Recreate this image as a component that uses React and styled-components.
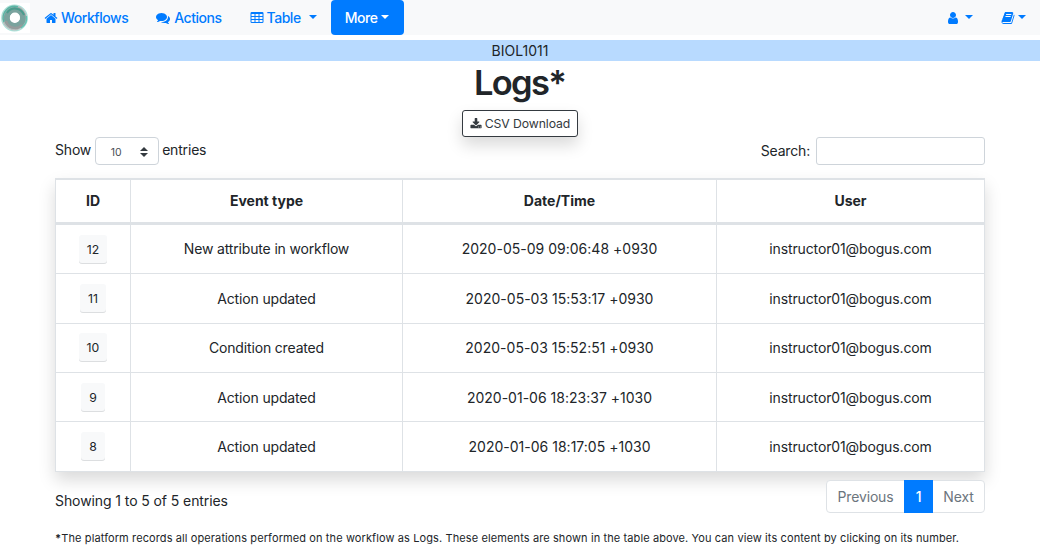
import React from 'react';
import styled, { createGlobalStyle, css } from 'styled-components';

const Global = createGlobalStyle`
  * { box-sizing: border-box; }
  body {
    margin: 0;
    background: #fff;
    color: #212529;
    font: 400 14px/21px Inter, "Liberation Sans", sans-serif;
    overflow: hidden;
  }
`;

const Navbar = styled.nav`
  display: flex;
  align-items: center;
  height: 35px;
  background: #f8f9fa;
  color: #007bff;
  font-weight: 500;
  letter-spacing: -0.47px;
`;

const Brand = styled.a`
  display: block;
  width: 30px;
  height: 30px;
  margin-top: 1px;
`;

const NavLink = styled.a`
  display: flex;
  align-items: center;
  height: 35px;
  margin-left: ${(p) => p.$gap || 0}px;
  white-space: nowrap;
  ${(p) =>
    p.$active &&
    css`
      width: 73px;
      padding-left: 14px;
      background: #007bff;
      color: #fff;
      border-radius: 4px;
    `}
`;

const Glyph = styled.svg`
  flex: none;
  width: ${(p) => p.$size || 14}px;
  height: ${(p) => p.$size || 14}px;
  margin-right: ${(p) => p.$after ?? 3}px;
  fill: currentColor;
`;

const Caret = styled.span`
  margin-left: ${(p) => p.$gap || 4}px;
  margin-top: -2px;
  border: 4px solid transparent;
  border-top-color: currentColor;
  border-bottom: 0;
`;

const NavEnd = styled.div`
  display: flex;
  margin-left: auto;
  padding-right: 14px;
`;

const Banner = styled.div`
  height: 21px;
  margin-top: 5px;
  background: #b8daff;
  text-align: center;
`;

const Page = styled.main`
  width: 930px;
  margin: 0 auto;
`;

const Title = styled.h1`
  margin: 0;
  height: 49px;
  padding: 1px 1px 0 0;
  font-size: 34.5px;
  line-height: 42px;
  font-weight: 600;
  letter-spacing: -1.7px;
  text-align: center;
`;

const DownloadButton = styled.button`
  display: flex;
  align-items: center;
  justify-content: center;
  width: 116px;
  height: 27px;
  margin: 0 auto;
  padding: 0;
  border: 1px solid #343a40;
  border-radius: 3px;
  background: #fff;
  color: #343a40;
  font: 400 12.25px/18px Inter, sans-serif;
  letter-spacing: -0.1px;
  box-shadow: 0 8px 16px rgba(0, 0, 0, 0.15);
`;

const Controls = styled.div`
  display: flex;
  justify-content: space-between;
  height: 41px;
`;

const Field = styled.label`
  display: flex;
  height: 28px;
  align-items: center;
  gap: ${(p) => p.$gap}px;
  letter-spacing: -0.18px;
`;

const FieldText = styled.span`
  padding-bottom: ${(p) => p.$lift}px;
`;

const Select = styled.span`
  display: flex;
  align-items: center;
  justify-content: space-between;
  width: 64px;
  height: 28px;
  padding: 2px 10px 0 15px;
  border: 1px solid #ced4da;
  border-radius: 4px;
  color: #495057;
  font-size: 10.5px;
  letter-spacing: 0;
`;

const Arrows = styled.svg`
  width: 8px;
  height: 10px;
  margin-top: -1px;
  fill: #343a40;
`;

const SearchInput = styled.input`
  width: 169px;
  height: 28px;
  border: 1px solid #ced4da;
  border-radius: 3px;
  background: #fff;
`;

const Table = styled.table`
  width: 930px;
  table-layout: fixed;
  border-collapse: separate;
  border-spacing: 0;
  border-left: 1px solid #dee2e6;
  border-top: 2px solid #dee2e6;
  box-shadow: 0 8px 16px rgba(0, 0, 0, 0.15);
  text-align: center;
`;

const HeadCell = styled.th`
  height: 45px;
  padding: 0 0 2px;
  border-right: 1px solid #dee2e6;
  border-bottom: 3px solid #dee2e6;
  font-weight: 700;
`;

const Cell = styled.td`
  height: ${(p) => p.$height}px;
  padding: 0 0 ${(p) => p.$lift || 0}px;
  border-right: 1px solid #dee2e6;
  border-bottom: 1px solid #dee2e6;
  vertical-align: middle;
  letter-spacing: ${(p) => p.$tracking || 0}px;
`;

const IdButton = styled.button`
  display: block;
  height: 29px;
  margin: 0 auto;
  padding: 0 8px;
  border: 0;
  border-radius: 3px;
  background: #f8f9fa;
  color: #212529;
  font: 400 12.25px/27px Inter, sans-serif;
  letter-spacing: 0.1px;
  box-shadow: inset 0 -1px 0 #dcdee0;
`;

const Footer = styled.div`
  display: flex;
  justify-content: space-between;
  height: 57px;
  padding-top: 8px;
`;

const Summary = styled.div`
  padding-top: 10px;
  letter-spacing: -0.09px;
`;

const Pager = styled.div`
  position: relative;
  display: flex;
  height: 33px;
  border: 1px solid #dee2e6;
  border-radius: 4px;
  background: #fff;
  color: #6c757d;
  letter-spacing: -0.15px;
`;

const PageItem = styled.a`
  width: ${(p) => p.$width}px;
  line-height: 32px;
  text-align: center;
  ${(p) =>
    p.$active &&
    css`
      margin: -1px 0;
      line-height: 34px;
      background: #007bff;
      color: #fff;
      font-weight: 500;
    `}
`;

const Note = styled.p`
  margin: 0;
  font-size: 11px;
  line-height: 18px;
  letter-spacing: 0.107px;
  white-space: nowrap;
`;

const paths = {
  home: 'M1472 992v480q0 26-19 45t-45 19h-384v-384h-256v384h-384q-26 0-45-19t-19-45v-480q0-1 .5-3t.5-3l575-474 575 474q1 2 1 6zm223-69l-62 74q-8 9-21 11h-3q-13 0-21-7l-692-577-692 577q-12 8-24 7-13-2-21-11l-62-74q-8-10-7-23.5t11-21.5l719-599q32-26 76-26t76 26l244 204v-195q0-14 9-23t23-9h192q14 0 23 9t9 23v408l219 182q10 8 11 21.5t-7 23.5z',
  comments: 'M1408 768q0 139-94 257t-256.5 186.5-353.5 68.5q-86 0-176-16-124 88-278 128-36 9-86 16h-3q-11 0-20.5-8t-11.5-21q-1-3-1-6.5t.5-6.5 2-6l2.5-5 3.5-5.5 4-5 4.5-5 4-4.5q5-6 23-25t26-29.5 22.5-29 25-38.5 20.5-44q-124-72-195-177t-71-224q0-139 94-257t256.5-186.5 353.5-68.5 353.5 68.5 256.5 186.5 94 257zm384 256q0 120-71 224.5t-195 176.5q10 24 20.5 44t25 38.5 22.5 29 26 29.5 23 25q1 1 4 4.5t4.5 5 4 5 3.5 5.5l2.5 5 2 6 .5 6.5-1 6.5q-3 14-13 22t-22 7q-50-7-86-16-154-40-278-128-90 16-176 16-271 0-472-132 58 4 88 4 161 0 309-45t264-129q125-92 192-212t67-254q0-77-23-152 129 71 204 178t75 230z',
  table: 'M224 128H1568a160 160 0 0 1 160 160V1376a160 160 0 0 1-160 160H224a160 160 0 0 1-160-160V288A160 160 0 0 1 224 128zM192 384V640H576V384zM704 384V640H1088V384zM1216 384V640H1600V384zM192 768V1024H576V768zM704 768V1024H1088V768zM1216 768V1024H1600V768zM192 1152V1408H576V1152zM704 1152V1408H1088V1152zM1216 1152V1408H1600V1152z',
  user: 'M1536 1399q0 109-62.5 187t-150.5 78h-854q-88 0-150.5-78t-62.5-187q0-85 8.5-160.5t31.5-152 58.5-131 94-89 134.5-34.5q131 128 313 128t313-128q76 0 134.5 34.5t94 89 58.5 131 31.5 152 8.5 160.5zm-256-887q0 159-112.5 271.5t-271.5 112.5-271.5-112.5-112.5-271.5 112.5-271.5 271.5-112.5 271.5 112.5 112.5 271.5z',
  book: 'M1703 478q40 57 18 129l-275 906q-19 64-76.5 107.5t-122.5 43.5h-923q-77 0-148.5-53.5t-99.5-131.5q-24-67-2-127 0-4 3-27t4-37q1-8-3-21.5t-3-19.5q2-11 8-21t16.5-23.5 16.5-23.5q23-38 45-91.5t30-91.5q3-10 .5-30t-.5-28q3-11 17-28t17-23q21-36 42-92t25-90q1-9-2.5-32t.5-28q4-13 22-30.5t22-22.5q19-26 42.5-84.5t27.5-96.5q1-8-3-25.5t-2-26.5q2-8 9-18t18-23 17-21q8-12 16.5-30.5t15-35 16-36 19.5-32 26.5-23.5 36-11.5 47.5 5.5l-1 3q38-9 51-9h761q74 0 114 56t18 130l-274 906q-36 119-71.5 153.5t-128.5 34.5h-869q-27 0-38 15-11 16-1 43 24 70 144 70h923q29 0 56-15.5t35-41.5l300-987q7-22 5-57 38 15 59 43zm-1064 2q-4 13 2 22.5t20 9.5h608q13 0 25.5-9.5t16.5-22.5l21-64q4-13-2-22.5t-20-9.5h-608q-13 0-25.5 9.5t-16.5 22.5zm-83 256q-4 13 2 22.5t20 9.5h608q13 0 25.5-9.5t16.5-22.5l21-64q4-13-2-22.5t-20-9.5h-608q-13 0-25.5 9.5t-16.5 22.5z',
  download: 'M1344 1344q0-26-19-45t-45-19-45 19-19 45 19 45 45 19 45-19 19-45zm256 0q0-26-19-45t-45-19-45 19-19 45 19 45 45 19 45-19 19-45zm128-224v320q0 40-28 68t-68 28h-1472q-40 0-68-28t-28-68v-320q0-40 28-68t68-28h465l135 136q58 56 136 56t136-56l136-136h464q40 0 68 28t28 68zm-325-569q17 41-14 70l-448 448q-18 19-45 19t-45-19l-448-448q-31-29-14-70 17-39 59-39h256v-448q0-26 19-45t45-19h256q26 0 45 19t19 45v448h256q42 0 59 39z',
};

const Icon = ({ name, size, after }) => (
  <Glyph viewBox="0 0 1792 1792" $size={size} $after={after}>
    <path fillRule="evenodd" d={paths[name]} />
  </Glyph>
);

const Logo = () => (
  <svg width="30" height="30" viewBox="0 0 30 30" fill="none">
    <path fill="#fff" d="M0 0h30v30H0z" />
    <circle cx="14.5" cy="15" r="12.8" stroke="#a9e3d9" strokeWidth="1.2" />
    <circle cx="14.5" cy="15" r="11.4" stroke="#b5bcbc" strokeWidth="2" />
    <circle cx="14.8" cy="15" r="8" stroke="#7aa39e" strokeWidth="6" />
    <path d="M4 19A11.5 11.5 0 0 1 18 3.800" stroke="#55b7a5" strokeWidth="1.4" />
    <path d="M7 10A9.500 9.500 0 0 1 24 12" stroke="#4a9c8d" strokeWidth="2" />
    <path d="M6 18A9.500 9.500 0 0 0 22 22" stroke="#969b9b" strokeWidth="2.500" />
    <path d="M21 25A12 12 0 0 0 26.500 13" stroke="#63c4b2" strokeWidth="1.2" />
    <circle cx="15" cy="14.500" r="5" fill="#fff" />
  </svg>
);

const rows = [
  [12, 'New attribute in workflow', '2020-05-09 09:06:48 +0930', 49],
  [11, 'Action updated', '2020-05-03 15:53:17 +0930', 50],
  [10, 'Condition created', '2020-05-03 15:52:51 +0930', 49],
  [9, 'Action updated', '2020-01-06 18:23:37 +1030', 49],
  [8, 'Action updated', '2020-01-06 18:17:05 +1030', 50],
];

export default function App() {
  return (
    <>
      <Global />
      <Navbar>
        <Brand><Logo /></Brand>
        <NavLink $gap={14}><Icon name="home" />Workflows</NavLink>
        <NavLink $gap={28}><Icon name="comments" after={4} />Actions</NavLink>
        <NavLink $gap={28}><Icon name="table" />Table<Caret $gap={8} /></NavLink>
        <NavLink $gap={14} $active>More<Caret /></NavLink>
        <NavEnd>
          <NavLink><Icon name="user" after={0} /><Caret $gap={5} /></NavLink>
          <NavLink $gap={28}><Icon name="book" after={0} /><Caret $gap={3} /></NavLink>
        </NavEnd>
      </Navbar>
      <Banner>BIOL1011</Banner>
      <Page>
        <Title>Logs*</Title>
        <DownloadButton><Icon name="download" size={12} />CSV Download</DownloadButton>
        <Controls>
          <Field $gap={3.5}>
            <FieldText $lift={3}>Show</FieldText>
            <Select>
              10
              <Arrows viewBox="0 0 9 11"><path d="M0 4.500 4.500 0 9 4.500zM0 6.500h9L4.500 11z" /></Arrows>
            </Select>
            <FieldText $lift={3}>entries</FieldText>
          </Field>
          <Field $gap={6}><FieldText $lift={1}>Search:</FieldText><SearchInput /></Field>
        </Controls>
        <Table>
          <colgroup>
            <col style={{ width: 75 }} />
            <col style={{ width: 272 }} />
            <col style={{ width: 314 }} />
            <col />
          </colgroup>
          <thead>
            <tr>
              {['ID', 'Event type', 'Date/Time', 'User'].map((h) => <HeadCell key={h}>{h}</HeadCell>)}
            </tr>
          </thead>
          <tbody>
            {rows.map(([id, event, date, height], i) => {
              const lift = i === 0 || i === 2 ? 1 : 0;
              return (
                <tr key={id}>
                  <Cell $height={height} $lift={i === 2 ? 1 : 0}><IdButton>{id}</IdButton></Cell>
                  <Cell $tracking={-0.16} $lift={lift}>{event}</Cell>
                  <Cell $tracking={0.01} $lift={lift}>{date}</Cell>
                  <Cell $tracking={-0.13} $lift={lift}>instructor01@bogus.com</Cell>
                </tr>
              );
            })}
          </tbody>
        </Table>
        <Footer>
          <Summary>Showing 1 to 5 of 5 entries</Summary>
          <Pager>
            <PageItem $width={77}>Previous</PageItem>
            <PageItem $width={29} $active>1</PageItem>
            <PageItem $width={51}>Next</PageItem>
          </Pager>
        </Footer>
        <Note><b>*</b>The platform records all operations performed on the workflow as Logs. These elements are shown in the table above. You can view its content by clicking on its number.</Note>
      </Page>
    </>
  );
}
